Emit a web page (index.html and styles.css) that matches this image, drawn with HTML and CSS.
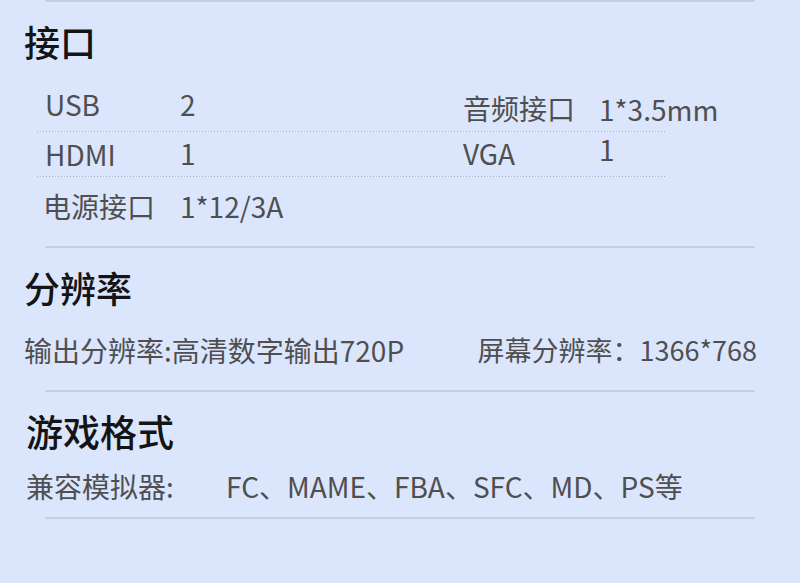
FILE: index.html
```html
<!DOCTYPE html>
<html lang="zh-CN">
<head>
<meta charset="utf-8">
<title>规格参数</title>
<link rel="stylesheet" href="styles.css">
</head>
<body>
<div class="page">
  <div class="rule"></div>
  <section class="sec">
    <h2 class="title">接口</h2>
    <div class="spec">
      <div class="row r1 dotted">
        <span class="c c-a">USB</span>
        <span class="c c-a">2</span>
        <span class="c c-b">音频接口</span>
        <span class="c c-c">1*3.5mm</span>
      </div>
      <div class="row r2 dotted">
        <span class="c c-d">HDMI</span>
        <span class="c c-e">1</span>
        <span class="c c-e">VGA</span>
        <span class="c c-f">1</span>
      </div>
      <div class="row r3">
        <span class="c c-g c-first">电源接口</span>
        <span class="c c-g">1*12/3A</span>
        <span class="c"></span>
        <span class="c"></span>
      </div>
    </div>
  </section>
  <div class="rule"></div>
  <section class="sec">
    <h2 class="title">分辨率</h2>
    <div class="line res">
      <span>输出分辨率:高清数字输出720P</span>
      <span class="res-right">屏幕分辨率：1366*768</span>
    </div>
  </section>
  <div class="rule"></div>
  <section class="sec sec-game">
    <h2 class="title">游戏格式</h2>
    <div class="line game">
      <span class="game-label">兼容模拟器:</span>
      <span>FC、MAME、FBA、SFC、MD、PS等</span>
    </div>
  </section>
  <div class="rule"></div>
</div>
</body>
</html>
```

FILE: styles.css
```css
* { box-sizing: border-box; }
html, body {
  margin: 0;
  padding: 0;
  background: #dbe6fd;
}
body {
  font-family: "Noto Sans CJK SC", "Noto Sans", sans-serif;
  font-weight: 400;
  color: #4f4f4f;
  width: 800px;
  height: 583px;
  overflow: hidden;
}
.page {
  display: flex;
  flex-direction: column;
}
.rule {
  height: 2px;
  margin: 0 45px;
  background: #c4cfe3;
}
.title {
  margin: 21px 0 0 24px;
  font-size: 36px;
  line-height: 36px;
  font-weight: 500;
  color: #141414;
}
.spec {
  margin: 28px 0 21px 37px;
  width: 630px;
}
.row {
  display: grid;
  grid-template-columns: 135px 283px 136px 76px;
  padding-left: 8px;
  height: 45px;
  font-size: 28px;
  line-height: 28px;
  white-space: nowrap;
}
.r3 { height: 48px; }
.dotted {
  background-image: repeating-linear-gradient(to right, #a7b0c0 0 1px, transparent 1px 3px);
  background-size: 100% 1px;
  background-position: left bottom;
  background-repeat: no-repeat;
}
.c-a { padding-top: 3px; }
.c-b { padding-top: 7px; }
.c-c { padding-top: 8px; }
.c-d { padding-top: 8px; }
.c-e { padding-top: 7px; }
.c-f { padding-top: 3px; }
.c-g { padding-top: 15px; }
.c-first { position: relative; left: -2px; }
.line {
  display: flex;
  font-size: 28px;
  line-height: 28px;
  white-space: nowrap;
}
.res {
  margin: 31px 0 26px 0;
  padding: 0 43px 0 24px;
}
.res-right { margin-left: auto; font-size: 27px; }
.sec-game .title { margin-left: 26px; font-size: 37px; }
.game {
  margin: 23px 0 17px 0;
  padding-left: 26px;
}
.game-label { width: 200px; }
```
